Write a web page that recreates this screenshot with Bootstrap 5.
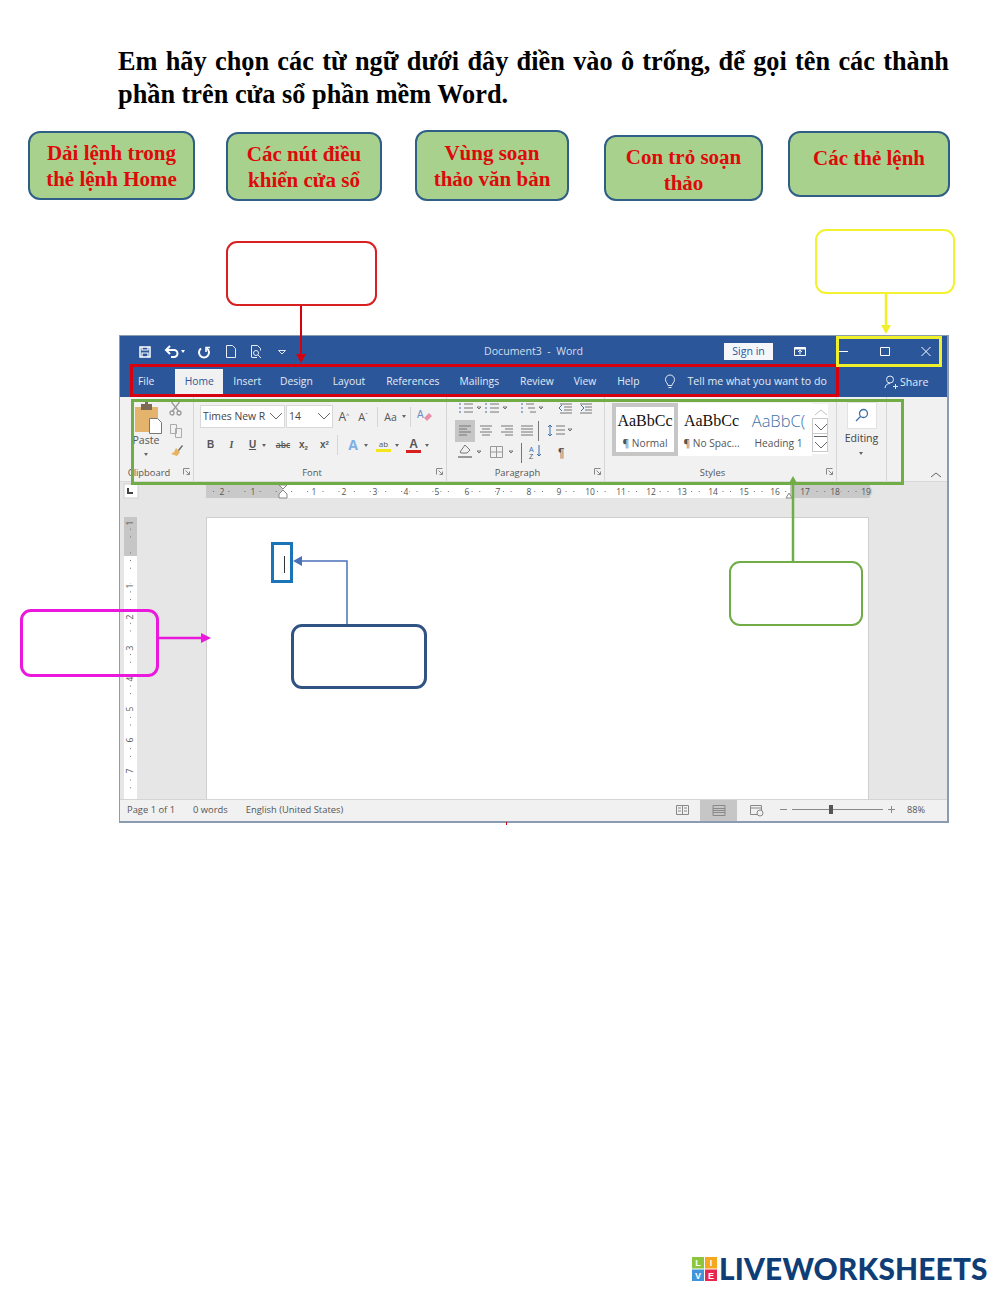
<!DOCTYPE html>
<html lang="vi">
<head>
<meta charset="utf-8">
<title>Word worksheet</title>
<link href="https://cdn.jsdelivr.net/npm/bootstrap@5.3.0/dist/css/bootstrap.min.css" rel="stylesheet">
<style>
html,body{margin:0;background:#fff}
.ws-sheet{position:relative;width:1000px;height:1294px;padding-top:45px;overflow:hidden;font-family:"Liberation Serif",serif}
.ws-heading{margin:0 51px 0 118px;font:700 26.3px/33px "Liberation Serif",serif;text-align:justify;color:#000;height:66px}
.ws-tags{margin-top:19px;height:71px;padding-left:28px}
.ws-tag{background:#a9d18e;border:2px solid #2f5f86;border-radius:12px;color:#dd0a0a;font:700 21px/26px "Liberation Serif",serif;text-align:center;display:flex;align-items:center;justify-content:center;flex:none;padding:0 6px}
.ws-t1{width:167px;height:69px;margin-top:1px}
.ws-t2{width:156px;height:69px;margin:2px 0 0 31px}
.ws-t3{width:154px;height:71px;margin-left:33px}
.ws-t4{width:159px;height:66px;margin:5px 0 0 35px;padding-top:4px}
.ws-t5{width:162px;height:66px;margin:1px 0 0 25px;padding-bottom:12px}
/* Word window */
.wd-win{width:830px;height:488px;margin:134px 0 0 119px;background:#e6e6e6;border:1px solid #8b9bb2;border-right-width:2px;border-bottom-width:2px;font-family:"Open Sans",sans-serif;color:#444;font-size:10px;display:flex;flex-direction:column}
.wd-title{height:31px;background:#2b579a;color:#dfe6f1;flex:none;position:relative}
.wd-qat{padding-left:18px;height:31px}
.wd-qat svg{flex:none}
.wd-doc-name{position:absolute;left:364px;top:8px;font-size:10.6px;color:#d5deec;white-space:pre}
.wd-sign{position:absolute;left:604px;top:7px;width:49px;height:17px;background:#f4f6fa;color:#2b579a;font-size:10.6px;line-height:17px;text-align:center}
.wd-ctl{position:absolute;top:0;height:31px}
.wd-tabs{height:30px;background:#2b579a;color:#e4eaf4;flex:none;font-size:10.3px;padding:2px 0 0 18px;position:relative}
.wd-tab{height:28px;line-height:25px;white-space:nowrap;flex:none}
.wd-tab-on{background:#f1f1f1;color:#2b579a;width:48px;text-align:center;margin-left:21px}
.wd-tab-tell{font-size:10.6px;margin-left:11px}
.wd-share{position:absolute;left:764px;top:5px;line-height:20px;color:#e4eaf4;font-size:10.6px}
.wd-ribbon{height:85px;background:#f1f1f1;flex:none;position:relative;border-bottom:1px solid #d8d8d8}
.wd-grp{height:84px;position:relative;border-right:1px solid #d6d6d6;flex:none}
.wd-grp-a{width:74px}.wd-grp-b{width:253px}.wd-grp-c{width:158px}.wd-grp-d{width:232px}.wd-grp-e{width:50px}
.wd-cap{position:absolute;bottom:2px;left:0;right:16px;text-align:center;font-size:9.4px;line-height:13px;color:#555}
.wd-launch{position:absolute;bottom:6px;right:3px;display:block}
.wd-rowline{position:absolute;display:flex;align-items:center;white-space:nowrap}
.wd-box{background:#fff;border:1px solid #d8d8d8;height:23px;font-size:10.4px;line-height:21px;padding-left:2px;position:relative;flex:none}
.wd-box svg{position:absolute;right:1px;top:6px}
.wd-ic{flex:none;text-align:center;font-size:10px;color:#555;line-height:16px}
.wd-b{font-weight:700;font-family:"Liberation Sans",sans-serif}
.wd-caret{flex:none;width:0;height:0;border:2.5px solid transparent;border-top:3px solid #666;border-bottom:0}
.wd-sep{width:1px;height:20px;background:#d6d6d6;flex:none}
.wd-gallery{position:absolute;left:7px;top:6px;width:200px;height:53px;background:#fff;display:flex}
.wd-sty{width:67px;height:53px;flex:none;text-align:center;white-space:nowrap;overflow:hidden;padding-top:7px}
.wd-sty-on{border:4px solid #c6c6c6;padding-top:3px;width:66px}
.wd-sty-a{font:16px/21px "Liberation Serif",serif;color:#111}
.wd-sty-h{font:300 16.500px/21px "Open Sans",sans-serif;color:#4472a8}
.wd-sty-n{font-size:10.2px;line-height:14px;margin-top:5px;color:#555}
.wd-scroll{position:absolute;left:207px;top:7px;width:16px;height:50px;background:#fff;display:flex;flex-direction:column}
.wd-scroll svg{flex:none;border:1px solid #c9c9c9;margin-bottom:-1px}
.wd-edit{position:absolute;left:10px;top:5px;width:30px;height:27px;background:#fff;border:1px solid #e2e2e2}
.wd-edit-t{position:absolute;left:0;right:0;top:34px;text-align:center;font-size:10.6px;line-height:15px;color:#444}
.wd-ruler{height:19px;flex:none;display:block}
.wd-body{flex:1 1 auto;min-height:0;display:flex;padding-left:4px;overflow:hidden;padding-top:16px}
.wd-vr{flex:none;display:block}
.wd-page{width:663px;background:#fff;border:1px solid #cfcfcf;border-bottom:0;margin-left:69px;flex:none}
.wd-status{height:22px;background:#f1f1f1;border-top:1px solid #d4d4d4;flex:none;font-size:9.4px;line-height:20px;color:#555;padding-left:7px;position:relative}
.wd-status span{margin-right:18px}
.wd-view{position:absolute;top:0;left:0;height:21px}
/* overlay callouts */
.ws-empty{position:absolute;border-radius:11px;border:2px solid;background:transparent}
.ws-red{left:226px;top:241px;width:151px;height:65px;border-color:#d92020;background:#fff}
.ws-yel{left:815px;top:229px;width:140px;height:65px;border-color:#f2f230;background:#fff}
.ws-grn{left:729px;top:561px;width:134px;height:65px;border-color:#70ad47;border-width:2.500px;background:#fff}
.ws-pnk{left:20px;top:609px;width:139px;height:68px;border-color:#ea17dd;border-width:3px}
.ws-blu{left:291px;top:624px;width:136px;height:65px;border-color:#2f5382;border-width:3px;background:#fff}
.ws-hl{position:absolute;border-style:solid}
.ws-hl-red{left:130px;top:364px;width:709px;height:33px;border-width:3px;border-color:#d6000f}
.ws-hl-yel{left:836px;top:336px;width:106px;height:31px;border-width:3px;border-color:#f0f02a}
.ws-hl-grn{left:131px;top:399px;width:773px;height:86px;border-width:3px;border-color:#70ad47}
.ws-hl-cur{left:271px;top:542px;width:22px;height:41px;border-width:3px;border-color:#1a74b8}
.ws-caretline{position:absolute;left:284px;top:556px;width:1px;height:17px;background:#333}
.ws-arrows{position:absolute;left:0;top:0;pointer-events:none}
.ws-logo{position:absolute;left:692px;top:1251px;display:flex;align-items:center;gap:2px}
.ws-logo-t{font:900 29.800px/36px Lato,sans-serif;color:#0f3d75;letter-spacing:.2px;white-space:nowrap}
</style>
</head>
<body>
<div class="ws-sheet">
  <p class="ws-heading">Em hãy chọn các từ ngữ dưới đây điền vào ô trống, để gọi tên các thành phần trên cửa sổ phần mềm Word.</p>

  <div class="ws-tags d-flex align-items-start">
    <div class="ws-tag ws-t1">Dải lệnh trong<br>thẻ lệnh Home</div>
    <div class="ws-tag ws-t2">Các nút điều<br>khiển cửa sổ</div>
    <div class="ws-tag ws-t3">Vùng soạn<br>thảo văn bản</div>
    <div class="ws-tag ws-t4">Con trỏ soạn<br>thảo</div>
    <div class="ws-tag ws-t5">Các thẻ lệnh</div>
  </div>

  <div class="wd-win">
    <div class="wd-title">
      <div class="wd-qat d-flex align-items-center">
        <svg width="14" height="14" viewBox="0 0 14 14" fill="none" stroke="#fff" stroke-width="1.5"><path d="M2 2h10v10H2z"/><path d="M4 2v3h6V2M4 12V8h6v4" stroke-width="1.2"/></svg>
        <svg width="16" height="14" viewBox="0 0 16 14" fill="none" stroke="#fff" stroke-width="2" style="margin-left:12px"><path d="M3 5h7a3.500 3.500 0 0 1 0 7H7"/><path d="M6 1 2 5l4 4"/></svg>
        <span class="wd-caret" style="border-top-color:#fff;margin:0 4px 0 1px"></span>
        <svg width="14" height="14" viewBox="0 0 14 14" fill="none" stroke="#fff" stroke-width="2" style="margin-left:8px"><path d="M4 3.500a5 5 0 1 0 6 0"/><path d="M9 7V2.500h4" stroke-width="1.600"/></svg>
        <svg width="14" height="15" viewBox="0 0 14 15" fill="none" stroke="#e8edf5" style="margin-left:13px"><path d="M2.500 1.500h6l3 3v9h-9z"/></svg>
        <svg width="15" height="15" viewBox="0 0 15 15" fill="none" stroke="#e8edf5" style="margin-left:11px"><path d="M2.500 13.500v-12h6l3 3v2"/><circle cx="7" cy="9" r="2.500"/><path d="M9 11l3 3M3 13.500h5"/></svg>
        <svg width="10" height="8" viewBox="0 0 10 8" fill="none" stroke="#dfe6f1" style="margin-left:13px"><path d="M1.500 2.500h7l-3.500 3.500z"/></svg>
      </div>
      <div class="wd-doc-name">Document3  -  Word</div>
      <div class="wd-sign">Sign in</div>
      <svg class="wd-ctl" style="left:673px" width="14" height="31" viewBox="0 0 14 31" fill="none" stroke="#fff"><path d="M1.500 11.500h11v8h-11z"/><path d="M2 12.500h10" stroke-width="2"/><path d="M7 18.500v-4M5 16l2-2 2 2"/></svg>
      <svg class="wd-ctl" style="left:717px" width="12" height="31" fill="none" stroke="#fff"><path d="M1 15.500h10"/></svg>
      <svg class="wd-ctl" style="left:759px" width="12" height="31" fill="none" stroke="#fff"><path d="M1.500 11.500h9v8h-9z"/></svg>
      <svg class="wd-ctl" style="left:800px" width="12" height="31" fill="none" stroke="#fff"><path d="m1.500 11 9 9m0-9-9 9"/></svg>
    </div>

    <div class="wd-tabs d-flex">
      <div class="wd-tab">File</div>
      <div class="wd-tab wd-tab-on">Home</div>
      <div class="wd-tab" style="margin-left:10px">Insert</div>
      <div class="wd-tab" style="margin-left:19px">Design</div>
      <div class="wd-tab" style="margin-left:20px">Layout</div>
      <div class="wd-tab" style="margin-left:21px">References</div>
      <div class="wd-tab" style="margin-left:20px">Mailings</div>
      <div class="wd-tab" style="margin-left:21px">Review</div>
      <div class="wd-tab" style="margin-left:20px">View</div>
      <div class="wd-tab" style="margin-left:21px">Help</div>
      <svg width="14" height="16" viewBox="0 0 14 16" fill="none" stroke="#e4eaf4" style="margin:5px 0 0 23px;flex:none"><path d="M5 11.500C5 9.500 2.500 8.500 2.500 5.500a4.500 4.500 0 0 1 9 0C11.500 8.500 9 9.500 9 11.500zM5.500 13.500h3"/></svg>
      <div class="wd-tab wd-tab-tell">Tell me what you want to do</div>
      <div class="wd-share d-flex align-items-center">
        <svg width="15" height="14" viewBox="0 0 15 14" fill="none" stroke="#e4eaf4" style="margin-right:1px"><circle cx="6" cy="4.500" r="3.500"/><path d="M1 13c.5-3 2-4.500 5-4.500M9 11.500h5M11.500 9v5"/></svg>Share
      </div>
    </div>

    <div class="wd-ribbon d-flex">
      <!-- Clipboard -->
      <div class="wd-grp wd-grp-a">
        <svg style="position:absolute;left:14px;top:5px" width="31" height="32" viewBox="0 0 31 32"><rect x="1" y="5" width="23" height="25" fill="#e4b36c"/><rect x="7" y="2" width="11" height="6" fill="#7d6a54"/><path d="M11 0h3v3h-3z" fill="#7d6a54"/><path d="M15.500 16.500h8l4 4v11h-12z" fill="#fff" stroke="#777"/></svg>
        <div class="wd-cap" style="top:36px;bottom:auto;left:7px;right:auto;width:38px;font-size:10.6px;line-height:14px">Paste</div>
        <span class="wd-caret" style="position:absolute;left:24px;top:56px"></span>
        <svg style="position:absolute;left:49px;top:5px" width="13" height="14" viewBox="0 0 13 14" fill="none" stroke="#999" stroke-width="1.300"><path d="m2.500 0 7 9M10.500 0l-7 9"/><circle cx="3" cy="11" r="2"/><circle cx="10" cy="11" r="2"/></svg>
        <svg style="position:absolute;left:50px;top:27px" width="12" height="14" viewBox="0 0 12 14" fill="none" stroke="#aaa"><path d="M.500.500h6v9h-6zM5.500 4.500h6v9h-6z" fill="#f1f1f1"/></svg>
        <svg style="position:absolute;left:50px;top:48px" width="13" height="12" viewBox="0 0 13 12"><path d="M6 3l4 4-3 4-6-2 3-2z" fill="#e7b35f"/><path d="m8 5 4-5 1 1-4 5z" fill="#666"/></svg>
        <div class="wd-cap" style="left:7px;right:auto;width:44px">Clipboard</div>
        <svg class="wd-launch" width="7" height="7" fill="none" stroke="#888"><path d="M.5 6.500v-6h6M2.500 2.500l4 4M6.500 3.500v3h-3"/></svg>
      </div>
      <!-- Font -->
      <div class="wd-grp wd-grp-b">
        <div class="wd-rowline" style="left:6px;top:8px">
          <div class="wd-box" style="width:85px">Times New R<svg width="14" height="9" fill="none" stroke="#666"><path d="m1 1 6 6 6-6"/></svg></div>
          <div class="wd-box" style="width:47px;margin-left:1px">14<svg width="14" height="9" fill="none" stroke="#666"><path d="m1 1 6 6 6-6"/></svg></div>
          <div class="wd-ic" style="width:16px;margin-left:3px;font-size:12px">A<sup style="font-size:6px;top:-.6em">^</sup></div>
          <div class="wd-ic" style="width:16px;margin-left:3px;font-size:11px">A<sup style="font-size:6px;top:-.6em">ˇ</sup></div>
          <div class="wd-sep" style="margin-left:6px"></div>
          <div class="wd-ic" style="width:15px;margin-left:5px;font-size:10.5px">Aa</div><span class="wd-caret" style="margin-left:4px"></span>
          <div class="wd-sep" style="margin-left:4px"></div>
          <svg style="margin-left:6px;flex:none" width="15" height="15" viewBox="0 0 15 15"><path d="m7 9 5-5 3 3-5 5z" fill="#e88fa8"/><text x="0" y="9" font-size="10" font-family="Liberation Sans" fill="#6a8fc0">A</text></svg>
        </div>
        <div class="wd-rowline" style="left:11px;top:38px">
          <div class="wd-ic wd-b" style="width:11px">B</div>
          <div class="wd-ic wd-b fst-italic" style="width:11px;margin-left:10px;font-family:'Liberation Serif',serif">I</div>
          <div class="wd-ic wd-b text-decoration-underline" style="width:11px;margin-left:10px">U</div>
          <span class="wd-caret" style="margin-left:4px"></span>
          <div class="wd-ic text-decoration-line-through" style="width:16px;margin-left:9px;font-size:8.5px;font-weight:600">abc</div>
          <div class="wd-ic wd-b" style="width:13px;margin-left:6px">x<sub style="font-size:6px">2</sub></div>
          <div class="wd-ic wd-b" style="width:13px;margin-left:8px">x<sup style="font-size:6px">2</sup></div>
          <div class="wd-sep" style="margin-left:6px"></div>
          <div class="wd-ic" style="width:16px;margin-left:7px;font-size:14px;font-weight:700;color:#7fb0e4">A</div><span class="wd-caret" style="margin-left:3px"></span>
          <div class="wd-ic" style="width:15px;margin-left:8px;font-size:8px;line-height:10px;border-bottom:3px solid #f5e51b">ab</div><span class="wd-caret" style="margin-left:4px"></span>
          <div class="wd-ic wd-b" style="width:15px;margin-left:7px;font-size:12px;line-height:12px;border-bottom:3px solid #d81e1e">A</div><span class="wd-caret" style="margin-left:4px"></span>
        </div>
        <div class="wd-cap">Font</div>
        <svg class="wd-launch" width="7" height="7" fill="none" stroke="#888"><path d="M.5 6.500v-6h6M2.500 2.500l4 4M6.500 3.500v3h-3"/></svg>
      </div>
      <!-- Paragraph -->
      <div class="wd-grp wd-grp-c">
        <svg style="position:absolute;left:0;top:0" width="157" height="68" viewBox="446 396 157 68" fill="none" stroke="#777">
          <path d="M463 403h9M463 407h9M463 411h9M489 403h9M489 407h9M489 411h9M525 403h8M527 407h7M529 411h6"/>
          <path d="M458 403h2M458 407h2M458 411h2M484 403h2M484 407h2M484 411h2M520 403h2M520 407h2M520 411h2" stroke="#3a6fb0"/>
          <path d="m476 406 4 0-2 2zM502 406h4l-2 2zM538 406h4l-2 2zM559 403h12M563 406h8M563 409h8M559 412h12M579 403h12M584 406h7M584 409h7M579 412h12"/>
          <path d="m561 404-3 3 3 3M580 404l3 3-3 3" stroke="#3a6fb0"/>
          <rect x="454" y="419" width="20" height="22" fill="#c6c6c6" stroke="none"/>
          <path d="M458 425h12M458 428h8M458 431h12M458 434h8M479 425h12M481 428h8M479 431h12M481 434h8M500 425h12M504 428h8M500 431h12M504 434h8M520 425h12M520 428h12M520 431h12M520 434h12"/>
          <path d="M537.500 420v20"/>
          <path d="M555 425h9M555 429h9M555 433h9" />
          <path d="M549 424v11M547 426l2-2 2 2M547 433l2 2 2-2" stroke="#3a6fb0"/>
          <path d="m567 428h4l-2 2zM476 450h4l-2 2zM508 450h4l-2 2z"/>
          <path d="m459 451 5-7 5 5-3 3h-6z"/>
          <path d="M457 456h14" stroke="#999" stroke-width="2"/>
          <path d="M489.500 445.500h12v11h-12zM495.500 445v12M489 451h13" stroke="#999"/>
          <path d="M520.500 442v20"/>
          <path d="M538 444v11M536 453l2 2 2-2" stroke="#3a6fb0"/>
          <text x="528" y="451" font-size="7" font-family="Liberation Sans" fill="#3a6fb0" stroke="none">A</text>
          <text x="528" y="458" font-size="7" font-family="Liberation Sans" fill="#555" stroke="none">Z</text>
          <text x="557" y="456" font-size="12" font-family="Liberation Sans" fill="#555" stroke="none">¶</text>
        </svg>
        <div class="wd-cap">Paragraph</div>
        <svg class="wd-launch" width="7" height="7" fill="none" stroke="#888"><path d="M.5 6.500v-6h6M2.500 2.500l4 4M6.500 3.500v3h-3"/></svg>
      </div>
      <!-- Styles -->
      <div class="wd-grp wd-grp-d">
        <div class="wd-gallery">
          <div class="wd-sty wd-sty-on"><div class="wd-sty-a">AaBbCc</div><div class="wd-sty-n">¶ Normal</div></div>
          <div class="wd-sty"><div class="wd-sty-a">AaBbCc</div><div class="wd-sty-n">¶ No Spac...</div></div>
          <div class="wd-sty"><div class="wd-sty-h">AaBbC(</div><div class="wd-sty-n">Heading 1</div></div>
        </div>
        <div class="wd-scroll">
          <svg width="16" height="15" fill="none" stroke="#c0c0c0" style="border-color:#fff"><path d="m2 10 6-5 6 5"/></svg>
          <svg width="16" height="16" fill="none" stroke="#666"><path d="m2 5 6 6 6-6"/></svg>
          <svg width="16" height="19" fill="none" stroke="#666"><path d="M1 2.500h14M2 8l6 6 6-6"/></svg>
        </div>
        <div class="wd-cap">Styles</div>
        <svg class="wd-launch" width="7" height="7" fill="none" stroke="#888"><path d="M.5 6.500v-6h6M2.500 2.500l4 4M6.500 3.500v3h-3"/></svg>
      </div>
      <!-- Editing -->
      <div class="wd-grp wd-grp-e">
        <div class="wd-edit"><svg style="margin:5px 0 0 7px;display:block" width="14" height="14" viewBox="0 0 14 14" fill="none" stroke="#3a6fa8" stroke-width="1.300"><circle cx="8.500" cy="5.500" r="4"/><path d="M5.500 8.500 1 13"/></svg></div>
        <div class="wd-edit-t">Editing</div>
        <span class="wd-caret" style="position:absolute;left:22px;top:55px"></span>
      </div>
      <svg style="position:absolute;left:810px;top:74px" width="12" height="8" fill="none" stroke="#666"><path d="m1 6 5-4 5 4"/></svg>
    </div>

    <svg class="wd-ruler" width="827" height="19" viewBox="120 481 827 19">
      <rect x="120" y="481" width="827" height="19" fill="#e6e6e6"/>
      <rect x="124" y="483" width="14" height="14" fill="#fff" stroke="#d0d0d0"/>
      <path d="M128 487v5h5" fill="none" stroke="#444" stroke-width="2"/>
      <rect x="206" y="484" width="77" height="13" fill="#c9c9c9"/>
      <rect x="283" y="484" width="507" height="13" fill="#fff"/>
      <rect x="790" y="484" width="80" height="13" fill="#c9c9c9"/>
      <line x1="206" x2="870" y1="490.500" y2="490.500" stroke="#777" stroke-dasharray="1 6.680 1 6.680 1 6.680 0 8.320" stroke-dashoffset="-7"/>
      <g font-family="Open Sans, sans-serif" font-size="8.500" fill="#555" text-anchor="middle" paint-order="stroke" stroke-width="3">
        <text x="222" y="494" stroke="#c9c9c9">2</text><text x="253" y="494" stroke="#c9c9c9">1</text>
        <text x="314" y="494" stroke="#fff">1</text><text x="344" y="494" stroke="#fff">2</text><text x="375" y="494" stroke="#fff">3</text><text x="406" y="494" stroke="#fff">4</text><text x="437" y="494" stroke="#fff">5</text><text x="467" y="494" stroke="#fff">6</text><text x="498" y="494" stroke="#fff">7</text><text x="529" y="494" stroke="#fff">8</text><text x="559" y="494" stroke="#fff">9</text><text x="590" y="494" stroke="#fff">10</text><text x="621" y="494" stroke="#fff">11</text><text x="651" y="494" stroke="#fff">12</text><text x="682" y="494" stroke="#fff">13</text><text x="713" y="494" stroke="#fff">14</text><text x="744" y="494" stroke="#fff">15</text><text x="775" y="494" stroke="#fff">16</text>
        <text x="805" y="494" stroke="#c9c9c9">17</text><text x="835" y="494" stroke="#c9c9c9">18</text><text x="866" y="494" stroke="#c9c9c9">19</text>
      </g>
      <path d="M279 484h8l-4 4zM279 493l4-4 4 4v4h-8z" fill="#fff" stroke="#888"/>
      <path d="M786 497l3-5 3 5z" fill="#fff" stroke="#888"/>
    </svg>

    <div class="wd-body">
      <svg class="wd-vr" width="13" height="284" viewBox="124 516 13 284">
        <rect x="124" y="516" width="13" height="39" fill="#c6c6c6"/>
        <rect x="124" y="555" width="13" height="245" fill="#fff"/>
        <line x1="130.500" x2="130.500" y1="516" y2="800" stroke="#777" stroke-dasharray="1 6.680 1 6.680 1 6.680 0 8.320" stroke-dashoffset="-4"/>
        <g font-family="Open Sans, sans-serif" font-size="8.500" fill="#555" text-anchor="middle" paint-order="stroke" stroke-width="3" stroke="#fff">
          <text transform="translate(133 522) rotate(-90)" stroke="#c6c6c6">1</text>
          <text transform="translate(133 585) rotate(-90)">1</text>
          <text transform="translate(133 616) rotate(-90)">2</text>
          <text transform="translate(133 647) rotate(-90)">3</text>
          <text transform="translate(133 678) rotate(-90)">4</text>
          <text transform="translate(133 708) rotate(-90)">5</text>
          <text transform="translate(133 739) rotate(-90)">6</text>
          <text transform="translate(133 770) rotate(-90)">7</text>
        </g>
      </svg>
      <div class="wd-page"></div>
    </div>

    <div class="wd-status">
      <span>Page 1 of 1</span><span>0 words</span><span>English (United States)</span>
      <svg class="wd-view" width="827" height="21" viewBox="120 801 827 21">
        <rect x="700" y="801" width="37" height="21" fill="#c6c6c6"/>
        <path d="M676.500 806.500h6v9h-6zM682.500 806.500h6v9h-6zM678 809h3M678 812h3M684 809h3M684 812h3" fill="none" stroke="#888"/>
        <path d="M713 806.500h12v10h-12zM713 809.500h12M713 811.500h12M713 813.500h12" fill="none" stroke="#888"/>
        <path d="M750.500 806.500h11v9h-11zM750.500 809h11" fill="none" stroke="#888"/>
        <circle cx="760" cy="814" r="3" fill="#f1f1f1" stroke="#888"/>
        <path d="M780 810.500h7M792 810.500h91M888 810.500h7M891.500 807v7M832 808v6" fill="none" stroke="#888"/>
        <rect x="829" y="806" width="4" height="9" fill="#555"/>
        <text x="907" y="814" font-size="9.200" font-family="Open Sans, sans-serif" fill="#555">88%</text>
      </svg>
    </div>
  </div>

  <!-- Overlaid callouts and highlights -->
  <div class="ws-hl ws-hl-red"></div>
  <div class="ws-hl ws-hl-yel"></div>
  <div class="ws-hl ws-hl-grn"></div>
  <div class="ws-hl ws-hl-cur"></div>
  <div class="ws-caretline"></div>
  <div class="ws-empty ws-red"></div>
  <div class="ws-empty ws-yel"></div>
  <div class="ws-empty ws-grn"></div>
  <div class="ws-empty ws-pnk"></div>
  <div class="ws-empty ws-blu"></div>
  <svg class="ws-arrows" width="1000" height="1294" fill="none">
    <path d="M301 306v50" stroke="#d6000f" stroke-width="2"/><path d="m296 354 5 9 5-9z" fill="#d6000f"/>
    <path d="M886 294v34" stroke="#f0f02a" stroke-width="2.500"/><path d="m881 325 5 9 5-9z" fill="#f0f02a"/>
    <path d="M793 561v-78" stroke="#70ad47" stroke-width="2.500"/><path d="m788 485 5-9 5 9z" fill="#70ad47"/>
    <path d="M159 638h44" stroke="#ea17dd" stroke-width="2.500"/><path d="m201 633 10 5-10 5z" fill="#ea17dd"/>
    <path d="M347 624v-63h-48" stroke="#4a72b8" stroke-width="1.500"/><path d="m302 556-9 5 9 5z" fill="#4a72b8"/>
    <path d="M506.500 822v3" stroke="#d6000f"/>
  </svg>

  <div class="ws-logo">
    <svg width="25" height="24" viewBox="0 0 25 24" font-family="Liberation Sans, sans-serif" font-weight="700" font-size="9" fill="#fff" text-anchor="middle">
      <rect width="12" height="11.500" fill="#8cc63f"/><rect x="13" width="12" height="11.500" fill="#f4a81d"/>
      <rect y="12.500" width="12" height="11.500" fill="#3f94dc"/><rect x="13" y="12.500" width="12" height="11.500" fill="#e8274f"/>
      <text x="6" y="9">L</text><text x="19" y="9">I</text><text x="6" y="21.500">V</text><text x="19" y="21.500">E</text>
    </svg>
    <div class="ws-logo-t">LIVEWORKSHEETS</div>
  </div>
</div>
<script src="https://cdn.jsdelivr.net/npm/bootstrap@5.3.0/dist/js/bootstrap.bundle.min.js"></script>
</body>
</html>
